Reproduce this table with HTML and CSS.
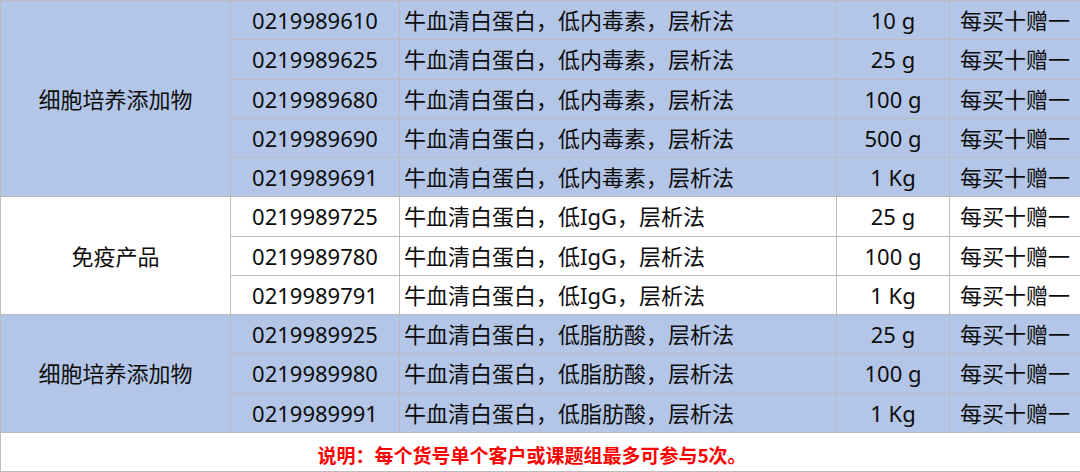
FILE: index.html
```html
<!DOCTYPE html>
<html lang="zh">
<head>
<meta charset="utf-8">
<title>牛血清白蛋白</title>
<link rel="stylesheet" href="styles.css">
</head>
<body>
<table class="price-table">
  <colgroup>
    <col class="c-cat">
    <col class="c-code">
    <col class="c-name">
    <col class="c-size">
    <col class="c-promo">
  </colgroup>
  <tbody class="group blue">
    <tr><td class="cat" rowspan="5">细胞培养添加物</td><td class="code">0219989610</td><td class="name">牛血清白蛋白，低内毒素，层析法</td><td class="size">10 g</td><td class="promo">每买十赠一</td></tr>
    <tr><td class="code">0219989625</td><td class="name">牛血清白蛋白，低内毒素，层析法</td><td class="size">25 g</td><td class="promo">每买十赠一</td></tr>
    <tr><td class="code">0219989680</td><td class="name">牛血清白蛋白，低内毒素，层析法</td><td class="size">100 g</td><td class="promo">每买十赠一</td></tr>
    <tr><td class="code">0219989690</td><td class="name">牛血清白蛋白，低内毒素，层析法</td><td class="size">500 g</td><td class="promo">每买十赠一</td></tr>
    <tr><td class="code">0219989691</td><td class="name">牛血清白蛋白，低内毒素，层析法</td><td class="size">1 Kg</td><td class="promo">每买十赠一</td></tr>
  </tbody>
  <tbody class="group white">
    <tr><td class="cat" rowspan="3">免疫产品</td><td class="code">0219989725</td><td class="name">牛血清白蛋白，低IgG，层析法</td><td class="size">25 g</td><td class="promo">每买十赠一</td></tr>
    <tr><td class="code">0219989780</td><td class="name">牛血清白蛋白，低IgG，层析法</td><td class="size">100 g</td><td class="promo">每买十赠一</td></tr>
    <tr><td class="code">0219989791</td><td class="name">牛血清白蛋白，低IgG，层析法</td><td class="size">1 Kg</td><td class="promo">每买十赠一</td></tr>
  </tbody>
  <tbody class="group blue">
    <tr><td class="cat" rowspan="3">细胞培养添加物</td><td class="code">0219989925</td><td class="name">牛血清白蛋白，低脂肪酸，层析法</td><td class="size">25 g</td><td class="promo">每买十赠一</td></tr>
    <tr><td class="code">0219989980</td><td class="name">牛血清白蛋白，低脂肪酸，层析法</td><td class="size">100 g</td><td class="promo">每买十赠一</td></tr>
    <tr><td class="code">0219989991</td><td class="name">牛血清白蛋白，低脂肪酸，层析法</td><td class="size">1 Kg</td><td class="promo">每买十赠一</td></tr>
  </tbody>
  <tfoot>
    <tr class="note-row"><td class="note" colspan="5">说明：每个货号单个客户或课题组最多可参与5次。</td></tr>
  </tfoot>
</table>
</body>
</html>
```

FILE: styles.css
```css
html, body {
  margin: 0;
  padding: 0;
  background: #ffffff;
}

.price-table {
  width: 1080px;
  border-collapse: collapse;
  table-layout: fixed;
  font-family: "Noto Sans", "Noto Sans CJK SC", sans-serif;
  font-size: 22px;
  color: #0d0d0d;
  border-left: 1px solid #a8a8a8;
  border-right: 1px solid #b4b4b4;
  border-bottom: 1px solid #b8b8b8;
}

.c-cat { width: 230px; }
.c-code { width: 169px; }
.c-name { width: 437px; }
.c-size { width: 113px; }
.c-promo { width: 131px; }

.price-table td {
  padding: 0;
  border: 1px solid #bcbcbc;
  line-height: 1;
  white-space: nowrap;
  overflow: hidden;
}

.price-table tbody tr {
  height: 39.25px;
}

.group:first-child tr:first-child td {
  border-top: none;
}

.blue td {
  background: #b4c6e7;
}

.white td {
  background: #ffffff;
}

.cat, .code, .size, .promo {
  text-align: center;
}

.name {
  text-align: left;
  padding-left: 4px !important;
}

.note-row {
  height: 39px;
}

.price-table .note {
  background: #ffffff;
  color: #ff0000;
  font-family: "Noto Sans CJK SC", sans-serif;
  font-weight: 700;
  font-size: 19px;
  text-align: center;
  padding: 6px 17px 0 0;
}
```
